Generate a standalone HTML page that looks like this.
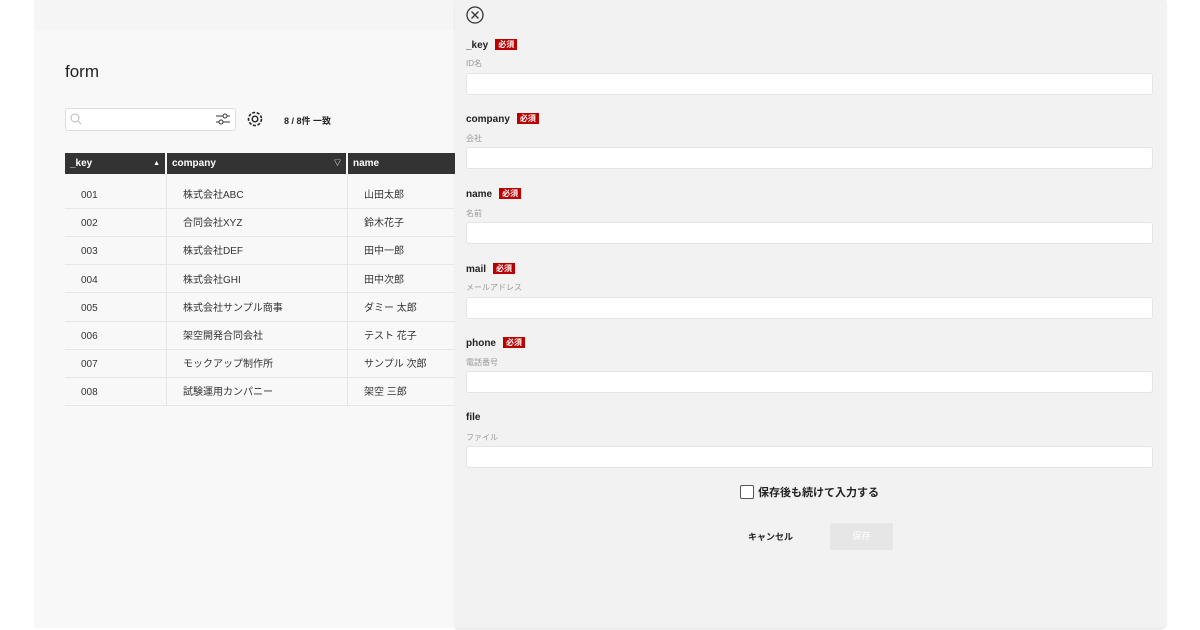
<!DOCTYPE html>
<html><head><meta charset="utf-8"><style>
*{margin:0;padding:0;box-sizing:border-box}
body{width:1200px;height:630px;background:#fff;position:relative;overflow:hidden;font-family:"Liberation Sans","Noto Sans CJK JP",sans-serif;color:#222}
.a{position:absolute}
#left{left:34px;top:0;width:421px;height:628px;background:#f8f8f8}
#right{left:455px;top:0;width:711px;height:628px;background:#f2f2f2;border-radius:0 0 6px 0;box-shadow:0 1px 2px #ddd}
.th{top:153px;height:21px;background:#333;color:#fff;font-size:10px;font-weight:bold;line-height:21px;padding-left:5px}
.td{font-size:10px;color:#333}
.row{left:65px;width:390px;height:1px;background:#e6e6e6}
.lbl{left:466px;font-size:10px;font-weight:bold}
.req{display:inline-block;background:#b00;color:#fff;font-size:8px;padding:0 3px;margin-left:7px;line-height:11px;vertical-align:1px}
.sub{left:466px;font-size:8px;color:#999}
.inp{left:466px;width:687px;height:22px;background:#fff;border:1px solid #e4e4e4;border-radius:3px}
</style></head><body>
<div class="a" id="left"></div>
<div class="a" style="left:34px;top:0;width:421px;height:30px;background:#f5f5f5"></div>
<div class="a" id="right"></div>
<div class="a" style="left:65px;top:62px;font-size:17px">form</div>
<div class="a" style="left:65px;top:108px;width:171px;height:23px;background:#fff;border:1px solid #ddd;border-radius:3px"></div>
<svg class="a" style="left:69px;top:112px" width="14" height="14"><circle cx="6" cy="6" r="4" fill="none" stroke="#bbb"/><path d="M9 9l3 3" stroke="#bbb"/></svg>
<svg class="a" style="left:215px;top:112px" width="16" height="14"><path d="M1 4h14M1 10h14" stroke="#333"/><circle cx="10" cy="4" r="2" fill="#fff" stroke="#333"/><circle cx="6" cy="10" r="2" fill="#fff" stroke="#333"/></svg>
<svg class="a" style="left:246px;top:110px" width="18" height="18"><circle cx="9" cy="9" r="6.5" fill="none" stroke="#222" stroke-width="1.6" stroke-dasharray="3 1.6"/><circle cx="9" cy="9" r="2.8" fill="none" stroke="#222" stroke-width="1.4"/></svg>
<div class="a" style="left:284px;top:114px;font-size:9px;font-weight:bold">8 / 8件 一致</div>
<div class="a th" style="left:65px;width:100px">_key<span style="position:absolute;right:5px;font-size:7px">▲</span></div>
<div class="a th" style="left:167px;width:179px">company<span style="position:absolute;right:5px;font-size:7px">▽</span></div>
<div class="a th" style="left:348px;width:107px">name</div>
<div class="a" style="left:166px;top:174px;width:1px;height:231px;background:#e6e6e6"></div>
<div class="a" style="left:347px;top:174px;width:1px;height:231px;background:#e6e6e6"></div>
<div class="a td" style="left:81px;top:182px;line-height:28.2px">001<br>002<br>003<br>004<br>005<br>006<br>007<br>008</div>
<div class="a td" style="left:183px;top:182px;line-height:28.2px">株式会社ABC<br>合同会社XYZ<br>株式会社DEF<br>株式会社GHI<br>株式会社サンプル商事<br>架空開発合同会社<br>モックアップ制作所<br>試験運用カンパニー</div>
<div class="a td" style="left:364px;top:182px;line-height:28.2px">山田太郎<br>鈴木花子<br>田中一郎<br>田中次郎<br>ダミー 太郎<br>テスト 花子<br>サンプル 次郎<br>架空 三郎</div>
<div class="a row" style="top:208px"></div><div class="a row" style="top:236px"></div><div class="a row" style="top:264px"></div><div class="a row" style="top:292px"></div><div class="a row" style="top:321px"></div><div class="a row" style="top:349px"></div><div class="a row" style="top:377px"></div><div class="a row" style="top:405px"></div>
<svg class="a" style="left:465px;top:5px" width="20" height="20"><circle cx="10" cy="10" r="8" fill="none" stroke="#333" stroke-width="1.3"/><path d="M6.5 6.5l7 7M13.5 6.5l-7 7" stroke="#333" stroke-width="1.3"/></svg>
<div class="a lbl" style="top:39px">_key<span class="req">必須</span></div><div class="a sub" style="top:58px">ID名</div><div class="a inp" style="top:73px"></div>
<div class="a lbl" style="top:113px">company<span class="req">必須</span></div><div class="a sub" style="top:133px">会社</div><div class="a inp" style="top:147px"></div>
<div class="a lbl" style="top:188px">name<span class="req">必須</span></div><div class="a sub" style="top:208px">名前</div><div class="a inp" style="top:222px"></div>
<div class="a lbl" style="top:263px">mail<span class="req">必須</span></div><div class="a sub" style="top:282px">メールアドレス</div><div class="a inp" style="top:297px"></div>
<div class="a lbl" style="top:337px">phone<span class="req">必須</span></div><div class="a sub" style="top:357px">電話番号</div><div class="a inp" style="top:371px"></div>
<div class="a lbl" style="top:412px">file</div><div class="a sub" style="top:432px">ファイル</div><div class="a inp" style="top:446px"></div>
<div class="a" style="left:740px;top:485px;width:14px;height:14px;border:1.5px solid #555;border-radius:2px;background:#fff"></div>
<div class="a" style="left:758px;top:484px;font-size:11px;font-weight:bold">保存後も続けて入力する</div>
<div class="a" style="left:748px;top:530px;font-size:9px;font-weight:bold">キャンセル</div>
<div class="a" style="left:830px;top:523px;width:63px;height:27px;background:#e6e6e6;border-radius:2px;color:#fff;font-size:9px;text-align:center;line-height:27px">保存</div>
</body></html>
